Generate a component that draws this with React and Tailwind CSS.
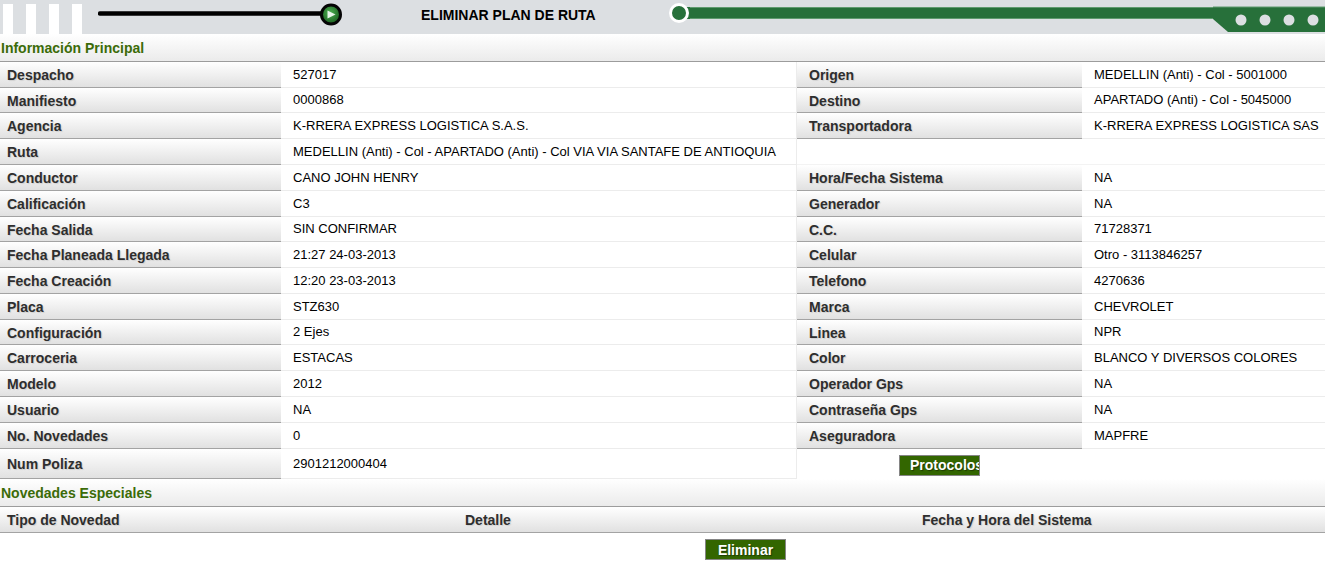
import React from "react";

const rows = [
  ["Despacho", "527017", "Origen", "MEDELLIN (Anti) - Col - 5001000", 26],
  ["Manifiesto", "0000868", "Destino", "APARTADO (Anti) - Col - 5045000", 25],
  ["Agencia", "K-RRERA EXPRESS LOGISTICA S.A.S.", "Transportadora", "K-RRERA EXPRESS LOGISTICA SAS", 26],
  ["Ruta", "MEDELLIN (Anti) - Col - APARTADO (Anti) - Col VIA VIA SANTAFE DE ANTIOQUIA", null, null, 26],
  ["Conductor", "CANO JOHN HENRY", "Hora/Fecha Sistema", "NA", 26],
  ["Calificación", "C3", "Generador", "NA", 26],
  ["Fecha Salida", "SIN CONFIRMAR", "C.C.", "71728371", 25],
  ["Fecha Planeada Llegada", "21:27 24-03-2013", "Celular", "Otro - 3113846257", 26],
  ["Fecha Creación", "12:20 23-03-2013", "Telefono", "4270636", 26],
  ["Placa", "STZ630", "Marca", "CHEVROLET", 26],
  ["Configuración", "2 Ejes", "Linea", "NPR", 25],
  ["Carroceria", "ESTACAS", "Color", "BLANCO Y DIVERSOS COLORES", 26],
  ["Modelo", "2012", "Operador Gps", "NA", 26],
  ["Usuario", "NA", "Contraseña Gps", "NA", 26],
  ["No. Novedades", "0", "Aseguradora", "MAPFRE", 26],
];

function Label({ children, pl = "pl-[7px]" }) {
  return (
    <div
      className={`flex items-center ${pl} pt-[2px] bg-linear-to-b from-white to-[#e1e1e1] border-b border-[#a3a3a3] text-[14px] font-bold text-[#2e2e2e] [text-shadow:1px_1px_1px_#d0d0d0] whitespace-nowrap`}
    >
      {children}
    </div>
  );
}

function Value({ children, right = false }) {
  return (
    <div
      className={`flex items-center pl-[12px] bg-white border-b border-[#ececec] ${
        right ? "" : "border-r"
      } text-[13px] text-black whitespace-nowrap overflow-hidden`}
    >
      {children}
    </div>
  );
}

function Empty() {
  return <div className="bg-white border-b border-[#f3f3f3]" />;
}

function SectionTitle({ children }) {
  return (
    <div className="h-[28px] flex items-center pl-[1px] pt-[2px] bg-linear-to-b from-white to-[#ebebeb] border-b border-[#9c9c9c] text-[14px] font-bold text-[#3b6b08]">
      {children}
    </div>
  );
}

function GreenButton({ children, className = "" }) {
  return (
    <button
      className={`h-[21px] w-[81px] bg-[#336600] border border-[#858585] text-white text-[14px] font-bold leading-none whitespace-nowrap overflow-hidden [text-shadow:1px_1px_1px_#1e3a00] ${className}`}
    >
      {children}
    </button>
  );
}

function Header() {
  return (
    <div className="h-[34px] bg-[#dcdfe2] flex">
      <div className="w-[668px] flex shrink-0">
        <div className="flex items-end gap-[13px] pl-[3px] pt-[4px]">
          <div className="w-[10px] h-[30px] bg-white" />
          <div className="w-[10px] h-[30px] bg-white" />
          <div className="w-[10px] h-[30px] bg-white" />
          <div className="w-[10px] h-[30px] bg-white" />
        </div>
        <svg width="246" height="34" className="ml-[16px]" viewBox="0 0 246 34">
          <line x1="2" y1="13.5" x2="230" y2="13.5" stroke="#000" strokeWidth="4.5" strokeLinecap="round" />
          <defs>
            <radialGradient id="gbtn" cx="0.45" cy="0.4" r="0.6">
              <stop offset="0" stopColor="#4caf50" />
              <stop offset="1" stopColor="#1b5e20" />
            </radialGradient>
          </defs>
          <circle cx="233" cy="14.5" r="9.5" fill="url(#gbtn)" stroke="#050505" strokeWidth="3" />
          <path d="M229.5 10.5 L237.5 14.5 L229.5 18.5 Z" fill="#e8f5e9" />
        </svg>
        <div className="ml-[77px] pt-[5px] text-[14px] font-bold text-black whitespace-nowrap">
          ELIMINAR PLAN DE RUTA
        </div>
      </div>
      <div className="flex-1 flex">
        <svg width="22" height="34" viewBox="0 0 22 34" className="shrink-0">
          <rect x="11" y="7" width="11" height="12" fill="#27703a" />
          <circle cx="11" cy="13" r="8.5" fill="#27703a" stroke="#fff" strokeWidth="3" />
        </svg>
        <div className="flex-1 mt-[7px] h-[12px] bg-[#27703a] border-y border-[#5f9a6e]" />
        <svg width="112" height="34" viewBox="0 0 112 34" className="shrink-0">
          <path d="M0 7 H112 V32 H15 L0 19 Z" fill="#27703a" />
          <path d="M0 7 H112" stroke="#5f9a6e" strokeWidth="1" />
          <circle cx="28" cy="20" r="5.5" fill="#dcdfe2" />
          <circle cx="52" cy="20" r="5.5" fill="#dcdfe2" />
          <circle cx="76" cy="20" r="5.5" fill="#dcdfe2" />
          <circle cx="100" cy="20" r="5.5" fill="#dcdfe2" />
        </svg>
      </div>
    </div>
  );
}

export default function App() {
  return (
    <div className="w-[1325px] h-[561px] bg-white overflow-hidden font-['Liberation_Sans',Arial,sans-serif]">
      <Header />
      <SectionTitle>Información Principal</SectionTitle>
      <div className="grid grid-cols-[281px_516px_285px_1fr]">
        {rows.map(([l1, v1, l2, v2, h]) => (
          <React.Fragment key={l1}>
            <div className={h === 25 ? "contents [&>*]:h-[25px]" : "contents [&>*]:h-[26px]"}>
              <Label>{l1}</Label>
              <Value>{v1}</Value>
              {l2 ? <Label pl="pl-[12px]">{l2}</Label> : <Empty />}
              {v2 ? <Value right>{v2}</Value> : <Empty />}
            </div>
          </React.Fragment>
        ))}
        <div className="contents [&>*]:h-[30px]">
          <Label>Num Poliza</Label>
          <Value>2901212000404</Value>
          <div className="bg-white flex items-center justify-center pt-[2px]">
            <GreenButton className="text-left pl-[10px]">Protocolos</GreenButton>
          </div>
          <div className="bg-white" />
        </div>
      </div>
      <SectionTitle>Novedades Especiales</SectionTitle>
      <div className="grid grid-cols-[458px_457px_1fr] h-[26px] pt-[2px] bg-linear-to-b from-white to-[#e1e1e1] border-b border-[#a3a3a3] text-[14px] font-bold text-[#2e2e2e] [text-shadow:1px_1px_1px_#d0d0d0]">
        <div className="flex items-center pl-[7px]">Tipo de Novedad</div>
        <div className="flex items-center pl-[7px]">Detalle</div>
        <div className="flex items-center pl-[7px]">Fecha y Hora del Sistema</div>
      </div>
      <div className="flex pt-[6px] pl-[705px]">
        <GreenButton>Eliminar</GreenButton>
      </div>
    </div>
  );
}
